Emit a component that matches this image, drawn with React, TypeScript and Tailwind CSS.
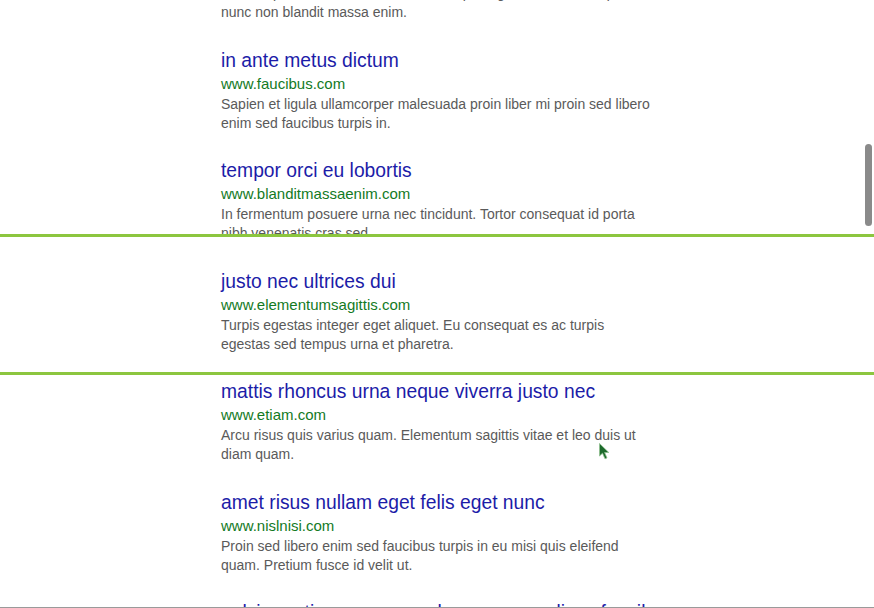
type Result = {
  title: string;
  url: string;
  lines: string[];
};

const results: Result[] = [
  {
    title: "lectus magna fringilla urna",
    url: "www.porttitor.com",
    lines: ["Vitae turpis massa sed elementum tempus egestas sed risus quis,", "nunc non blandit massa enim."],
  },
  {
    title: "in ante metus dictum",
    url: "www.faucibus.com",
    lines: ["Sapien et ligula ullamcorper malesuada proin liber mi proin sed libero", "enim sed faucibus turpis in."],
  },
  {
    title: "tempor orci eu lobortis",
    url: "www.blanditmassaenim.com",
    lines: ["In fermentum posuere urna nec tincidunt. Tortor consequat id porta", "nibh venenatis cras sed."],
  },
  {
    title: "justo nec ultrices dui",
    url: "www.elementumsagittis.com",
    lines: ["Turpis egestas integer eget aliquet. Eu consequat es ac turpis", "egestas sed tempus urna et pharetra."],
  },
  {
    title: "mattis rhoncus urna neque viverra justo nec",
    url: "www.etiam.com",
    lines: ["Arcu risus quis varius quam. Elementum sagittis vitae et leo duis ut", "diam quam."],
  },
  {
    title: "amet risus nullam eget felis eget nunc",
    url: "www.nislnisi.com",
    lines: ["Proin sed libero enim sed faucibus turpis in eu misi quis eleifend", "quam. Pretium fusce id velit ut."],
  },
  {
    title: "pulvinar etiam non quam lacus suspendisse faucibus",
    url: "www.interdum.com",
    lines: ["Ultrices tincidunt arcu non sodales neque sodales ut etiam sit amet.", "Nisl purus in mollis nunc sed id semper."],
  },
];

const Entry = ({ r }: { r: Result }) => (
  <div className="mb-[26.5px]">
    <a className="block text-[19.3px] leading-[24px] text-[#1c1ca8] whitespace-nowrap">{r.title}</a>
    <div className="text-[15px] leading-[22px] text-[#137a1f] whitespace-nowrap">{r.url}</div>
    <p className="text-[14px] leading-[19px] text-[#5a5a5a]">
      {r.lines.map((l) => (
        <span key={l} className="block whitespace-nowrap">
          {l}
        </span>
      ))}
    </p>
  </div>
);

export default function App() {
  return (
    <div
      className="relative h-[608px] w-full overflow-hidden bg-white border-b border-[#9a9a9a]"
      style={{ fontFamily: '"Liberation Sans", Arial, sans-serif' }}
    >
      <div className="mt-[-62px] pl-[221px] w-[655px]">
        {results.map((r) => (
          <Entry key={r.url} r={r} />
        ))}
      </div>

      {/* highlighted band */}
      <div className="absolute left-0 right-0 top-[234px] h-[141px] border-y-[3px] border-[#8cc63f] bg-white overflow-hidden">
        <div className="pt-[33px] pl-[221px] w-[655px]">
          <Entry r={results[3]} />
        </div>
      </div>

      {/* overlay scrollbar */}
      <div className="absolute right-[2px] top-[144px] h-[82px] w-[7px] rounded-full bg-[#8a8a8a]" />

      {/* mouse pointer */}
      <svg className="absolute left-[599px] top-[443px]" width="11" height="17" viewBox="0 0 11 17">
        <path d="M0.5 0.5 L0.5 13 L3.5 10.2 L6 15.8 L8 14.9 L5.6 9.5 L9.8 9.5 Z" fill="#1d6a2c" stroke="#8fbf8f" strokeWidth="0.8" />
      </svg>
    </div>
  );
}
